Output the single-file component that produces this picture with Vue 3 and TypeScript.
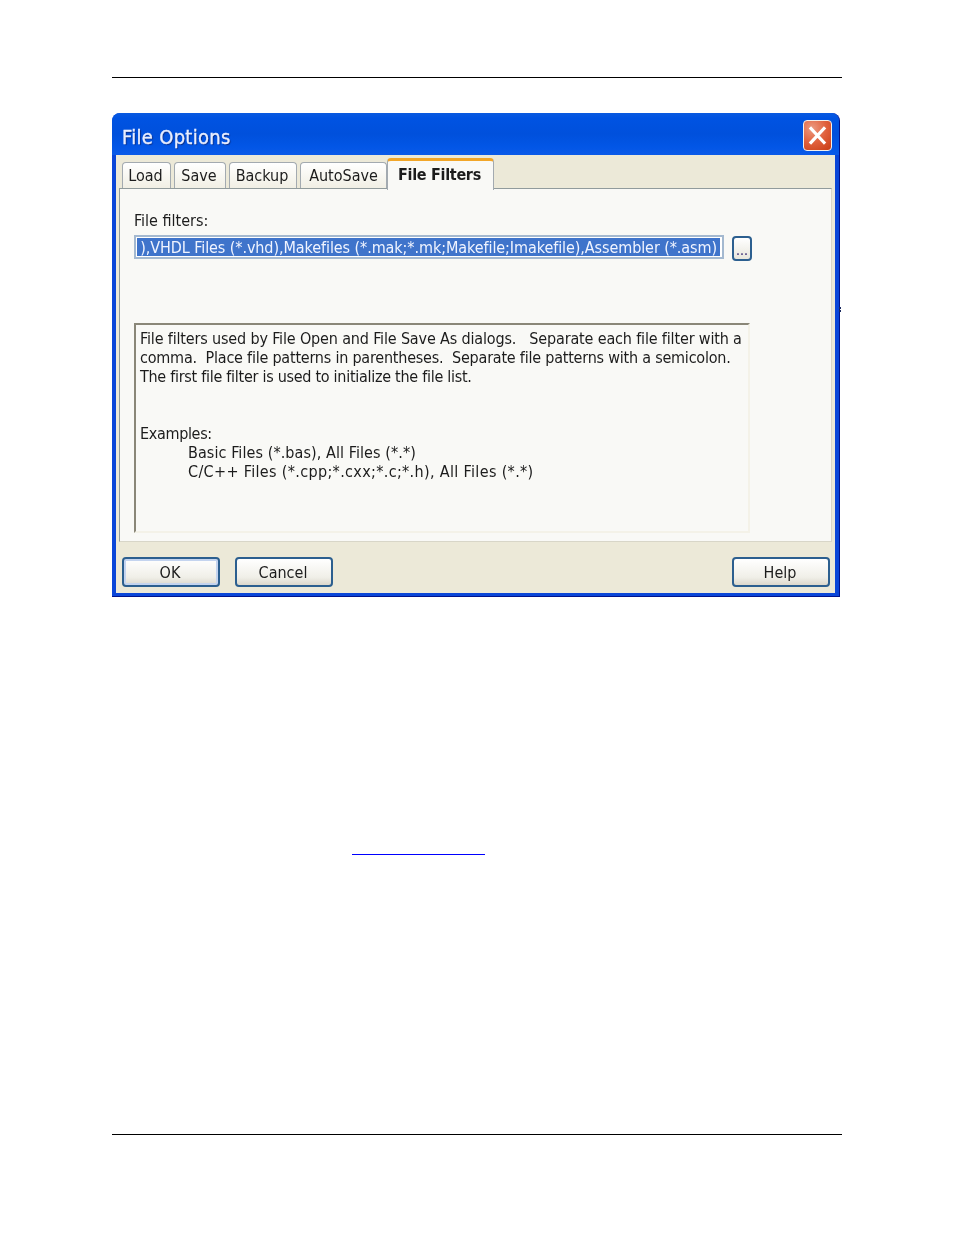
<script setup lang="ts">
const tabs: string[] = ['Load', 'Save', 'Backup', 'AutoSave']
const helpLines: { text: string; cls: string }[] = [
  { text: 'File filters used by File Open and File Save As dialogs.   Separate each file filter with a', cls: 'l1' },
  { text: 'comma.  Place file patterns in parentheses.  Separate file patterns with a semicolon.', cls: 'l2' },
  { text: 'The first file filter is used to initialize the file list.', cls: 'l3' },
]
</script>

<template>
  <div class="page">
    <div class="rule"></div>
    <div class="window">
      <div class="titlebar">
        <span class="title">File Options</span>
        <span class="close">
          <svg viewBox="0 0 29 31" width="29" height="31">
            <path d="M8 8.5 L21 22.5 M21 8.5 L8 22.5" stroke="#fff" stroke-width="3.2" stroke-linecap="square" fill="none" />
          </svg>
        </span>
        <span class="edge-mark"></span>
      </div>
      <div class="client">
        <div class="tabs">
          <span v-for="t in tabs" :key="t" class="tab" :class="'tab-' + t.toLowerCase()">{{ t }}</span>
          <span class="tab active">File Filters</span>
        </div>
        <div class="pane">
          <div class="label">File filters:</div>
          <div class="field-row">
            <div class="field"><span class="sel">),VHDL Files (*.vhd),Makefiles (*.mak;*.mk;Makefile;Imakefile),Assembler (*.asm)</span></div>
            <span class="dots">...</span>
          </div>
          <div class="help">
            <div v-for="l in helpLines" :key="l.cls" class="line" :class="l.cls">{{ l.text }}</div>
            <div class="line examples">Examples:</div>
            <div class="line indent l5">Basic Files (*.bas), All Files (*.*)</div>
            <div class="line indent l6">C/C++ Files (*.cpp;*.cxx;*.c;*.h), All Files (*.*)</div>
          </div>
        </div>
        <div class="buttons">
          <button class="btn default">OK</button>
          <button class="btn">Cancel</button>
          <button class="btn help-btn">Help</button>
        </div>
      </div>
    </div>
    <div class="link"></div>
    <div class="rule bottom"></div>
  </div>
</template>

<style>
html, body { margin: 0; background: #fff; }
</style>

<style scoped>
.page {
  width: 954px;
  height: 1235px;
  padding: 77px 112px 0;
  box-sizing: border-box;
  background: #fff;
  font-family: "DejaVu Sans", "Noto Sans", sans-serif;
  font-stretch: condensed;
  overflow: hidden;
}
.rule { width: 730px; height: 1px; background: #000; }
.rule.bottom { margin-top: 279px; }
.window {
  position: relative;
  margin-top: 35px;
  width: 728px;
  height: 484px;
  box-sizing: border-box;
  background: #0a46d8;
  border-radius: 8px 8px 0 0;
  border-right: 1px solid #00138c;
  border-bottom: 1px solid #00138c;
  display: flex;
  flex-direction: column;
}
.titlebar {
  position: relative;
  height: 42px;
  flex: none;
  box-sizing: border-box;
  padding: 0 7px 0 10px;
  display: flex;
  align-items: center;
  justify-content: space-between;
  border-radius: 8px 8px 0 0;
  background: linear-gradient(#0a5ae0 0%, #0053e2 12%, #0050dc 50%, #0256e6 80%, #0a5ae8 100%);
}
.title {
  color: #e8eeff;
  font-size: 20px;
  font-weight: 400;
  letter-spacing: 0.3px;
  padding-top: 5px;
  -webkit-text-stroke: 0.35px #e8eeff;
  text-shadow: 1px 1px 1px #0a2a80;
  filter: blur(0.4px);
}
.close {
  width: 29px;
  height: 31px;
  box-sizing: border-box;
  display: block;
  border: 1px solid #f4f0ea;
  border-radius: 4px;
  background: radial-gradient(circle at 30% 25%, #ec9a80 0%, #e0603c 50%, #c83c14 100%);
  margin-top: 2px;
}
.close svg { display: block; margin: -1px; }
.edge-mark {
  position: absolute;
  left: 727px;
  top: 194px;
  width: 2px;
  height: 6px;
  background: repeating-linear-gradient(#1a2a60 0 2px, transparent 2px 3px);
}
.client {
  flex: 1;
  margin: 0 4px 3px 4px;
  background: #ece9d8;
  padding: 0 0 0 3px;
  display: flex;
  flex-direction: column;
  color: #1c1c1c;
}
.tabs {
  height: 35px;
  display: flex;
  align-items: flex-end;
  font-size: 16px;
  padding-left: 3px;
  position: relative;
  z-index: 1;
  margin-bottom: -2px;
}
.tab {
  box-sizing: border-box;
  height: 26px;
  margin-bottom: 2px;
  padding-right: 2px;
  border: 1px solid #a3aab0;
  border-bottom: none;
  border-radius: 4px 4px 0 0;
  background: linear-gradient(#fff, #f1efe4);
  display: flex;
  align-items: center;
  justify-content: center;
  filter: blur(0.3px);
}
.tab-load { width: 49px; margin-right: 3px; }
.tab-save { width: 52px; margin-right: 3px; }
.tab-backup { width: 68px; margin-right: 3px; }
.tab-autosave { width: 87px; padding-right: 0; }
.tab.active {
  width: 107px;
  height: 32px;
  margin-bottom: 0;
  font-weight: 700;
  letter-spacing: -0.3px;
  background: #f9f9f6;
  border-color: #a3aab0;
  border-top: 3px solid #f2a628;
  padding: 0 2px 2px 0;
  font-size: 16px;
}
.pane {
  width: 713px;
  height: 354px;
  flex: none;
  box-sizing: border-box;
  background: #f9f9f6;
  border: 1px solid #919b9c;
  border-right-color: #d8d6c8;
  border-bottom-color: #d8d6c8;
  padding: 22px 14px 0;
  font-size: 16px;
  filter: blur(0.3px);
}
.label { height: 20px; line-height: 20px; }
.field-row {
  margin-top: 4px;
  display: flex;
  align-items: flex-start;
  gap: 8px;
}
.field {
  box-sizing: border-box;
  width: 590px;
  height: 24px;
  border: 2px solid #a4b9d0;
  padding: 1px 2px 1px 1px;
  background: #fff;
  display: flex;
}
.sel {
  flex: 1;
  background: #3f74cb;
  color: #f0f4ff;
  line-height: 20px;
  white-space: nowrap;
  overflow: hidden;
  text-align: right;
  padding-right: 3px;
  letter-spacing: -0.08px;
}
.dots {
  box-sizing: border-box;
  width: 20px;
  height: 25px;
  margin-top: 1px;
  border: 2px solid #2c5f8f;
  border-radius: 4px;
  background: linear-gradient(#fff, #e8e6dc);
  font-size: 14px;
  line-height: 24px;
  text-align: center;
  color: #2a1a6a;
}
.help {
  box-sizing: border-box;
  width: 616px;
  height: 210px;
  margin-top: 62px;
  border: 2px solid #f4f2e8;
  border-top-color: #8a8778;
  border-left-color: #8a8778;
  padding: 4px;
}
.line { height: 19px; line-height: 19px; white-space: pre; }
.l1 { letter-spacing: -0.16px; }
.l2 { letter-spacing: -0.22px; }
.l3 { letter-spacing: -0.28px; }
.l5 { letter-spacing: 0.08px; }
.l6 { letter-spacing: 0.34px; }
.examples { margin-top: 38px; letter-spacing: -0.33px; }
.indent { padding-left: 48px; }
.buttons {
  display: flex;
  padding: 15px 5px 0 3px;
  gap: 15px;
}
.btn {
  width: 98px;
  height: 30px;
  box-sizing: border-box;
  border: 2px solid #2c5f8f;
  border-radius: 4px;
  background: linear-gradient(#fff, #f0efe8 70%, #dcd8cc);
  font: inherit;
  font-size: 16px;
  color: #1c1c1c;
  padding: 0 2px 0 0;
  filter: blur(0.3px);
}
.btn.default { box-shadow: inset 0 0 0 2px #c4d4ef; }
.help-btn { margin-left: auto; }
.link {
  margin: 257px 0 0 240px;
  width: 133px;
  height: 1px;
  background: #0000ff;
}
</style>
